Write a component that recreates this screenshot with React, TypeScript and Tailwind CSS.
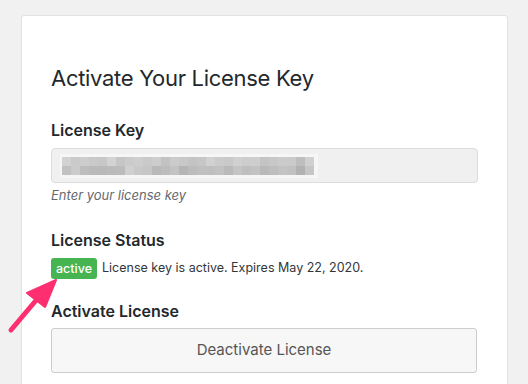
const ROW1 = [
  "#d2d2d2", "#cacaca", "#cdcdcd", "#c9c9c9", "#c7c7c7", "#d3d3d3", "#c6c6c6", "#cbcbcb", "#cecece",
  "#c9c9c9", "#cdcdcd", "#c2c2c2", "#cbcbcb", "#c8c8c8", "#c4c4c4", "#c6c6c6", "#d1d1d1", "#cbcbcb",
  "#c9c9c9", "#d0d0d0", "#cdcdcd", "#cecece", "#c4c4c4", "#c8c8c8", "#cbcbcb", "#cacaca", "#bebebe", "#d0d0d0",
]
const ROW2 = [
  "#c1c1c1", "#cbcbcb", "#bdbdbd", "#bababa", "#b9b9b9", "#bbbbbb", "#bcbcbc", "#d0d0d0", "#c9c9c9",
  "#c6c6c6", "#b9b9b9", "#bdbdbd", "#c3c3c3", "#b5b5b5", "#bcbcbc", "#c0c0c0", "#bfbfbf", "#c2c2c2",
  "#bababa", "#c5c5c5", "#bfbfbf", "#c3c3c3", "#b9b9b9", "#bebebe", "#c3c3c3", "#c1c1c1", "#b2b2b2", "#c6c6c6",
]

function BlurredKey() {
  return (
    <svg width="258" height="24" viewBox="0 0 258 24" className="block">
      <rect x="0" y="0" width="258" height="24" fill="#f6f6f6" />
      {ROW1.map((c, i) => (
        <rect key={"a" + i} x={2 + i * 9} y={3} width="9" height="9" fill={c} />
      ))}
      {ROW2.map((c, i) => (
        <rect key={"b" + i} x={2 + i * 9} y={12} width="9" height="9" fill={c} />
      ))}
    </svg>
  )
}

export default function App() {
  return (
    <div
      className="relative w-[528px] h-[384px] overflow-hidden bg-[#f1f1f1]"
      style={{ fontFamily: "Inter, 'Noto Sans', sans-serif" }}
    >
      <div className="ml-[21px] mt-[15px] w-[487px] h-[400px] bg-white border border-[#e2e2e2] rounded-[3px] shadow-[0_1px_1px_rgba(0,0,0,0.04)] px-[29px] pt-[47px]">
        {/* Header */}
        <h2 className="text-[22px] leading-[30px] tracking-[-0.3px] text-[#23282d] font-normal">
          Activate Your License Key
        </h2>

        <div className="mt-[27px] text-[16px] leading-[20px] font-semibold text-[#23282d]">
          License Key
        </div>
        <div className="mt-[8px] w-[427px] h-[35px] bg-[#f0f0f0] border border-[#dcdcdc] rounded-[4px] flex items-center pl-[8px]">
          <BlurredKey />
        </div>
        <p className="mt-[3px] text-[13px] leading-[18px] italic text-[#646970]">
          Enter your license key
        </p>

        <div className="mt-[26px] text-[16px] leading-[20px] font-semibold text-[#23282d]">
          License Status
        </div>
        <div className="mt-[8px] flex items-center gap-[5px]">
          <span className="h-[21px] px-[5px] rounded-[3px] bg-[#46b450] text-white text-[12.5px] font-medium leading-[21px]">
            active
          </span>
          <span className="text-[12.5px] text-[#32373c]">
            License key is active. Expires May 22, 2020.
          </span>
        </div>

        <div className="mt-[22px] text-[16px] leading-[20px] font-semibold text-[#23282d]">
          Activate License
        </div>
        <button className="mt-[7px] w-[426px] h-[45px] bg-[#f7f7f7] border border-[#cccccc] rounded-[3px] text-[15px] text-[#555555] flex items-center justify-center">
          Deactivate License
        </button>
      </div>

      {/* pink annotation arrow */}
      <svg
        className="absolute left-0 top-0 pointer-events-none"
        width="528"
        height="384"
        viewBox="0 0 528 384"
      >
        <line x1="11" y1="330" x2="38" y2="298" stroke="#fd2f70" strokeWidth="5" strokeLinecap="round" />
        <polygon points="56,280 27,293 45,307" fill="#fd2f70" stroke="#fd2f70" strokeWidth="2" strokeLinejoin="round" />
      </svg>
    </div>
  )
}
